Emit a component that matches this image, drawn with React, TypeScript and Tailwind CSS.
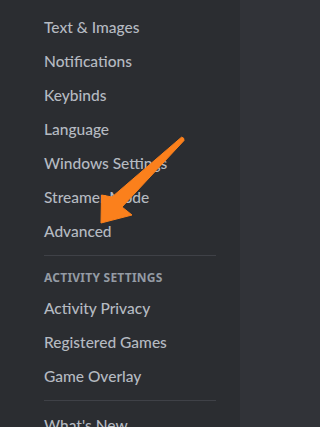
const items1 = [
  "Text & Images",
  "Notifications",
  "Keybinds",
  "Language",
  "Windows Settings",
  "Streamer Mode",
  "Advanced",
];

const items2 = ["Activity Privacy", "Registered Games", "Game Overlay"];

function NavItem({ label }: { label: string }) {
  return (
    <div className="mb-[2px] flex h-8 items-center rounded px-[10px] font-['Lato',sans-serif] text-[15.5px] font-medium leading-5 text-[#b5bac1]">
      {label}
    </div>
  );
}

function Separator() {
  return <div className="mx-[10px] my-2 h-px bg-[#3f4147]" />;
}

export default function App() {
  return (
    <div className="relative flex h-[427px] w-full min-w-[247px] overflow-hidden bg-[#313338] font-['Noto_Sans',sans-serif]">
      <div className="w-[240px] shrink-0 bg-[#2b2d31] pl-[34px] pr-[14px] pt-[11px]">
        {items1.map((label) => (
          <NavItem key={label} label={label} />
        ))}
        <Separator />
        <div className="px-[10px] py-[6px] text-[12px] font-bold uppercase leading-4 tracking-[0.02em] text-[#949ba4]">
          Activity Settings
        </div>
        {items2.map((label) => (
          <NavItem key={label} label={label} />
        ))}
        <Separator />
        <NavItem label="What's New" />
      </div>
      <div className="flex-1" />

      {/* annotation arrow */}
      <svg
        className="pointer-events-none absolute left-0 top-0"
        width="247"
        height="427"
        viewBox="0 0 247 427"
      >
        <path
          d="M181.5 137.2 Q184.5 137.5 184 140.5 L122 207 L132 215 L101 223 L101.5 195 L112 197 Z"
          fill="#fb801c"
          stroke="#fb801c"
          strokeWidth="1"
          strokeLinejoin="round"
        />
      </svg>
    </div>
  );
}
